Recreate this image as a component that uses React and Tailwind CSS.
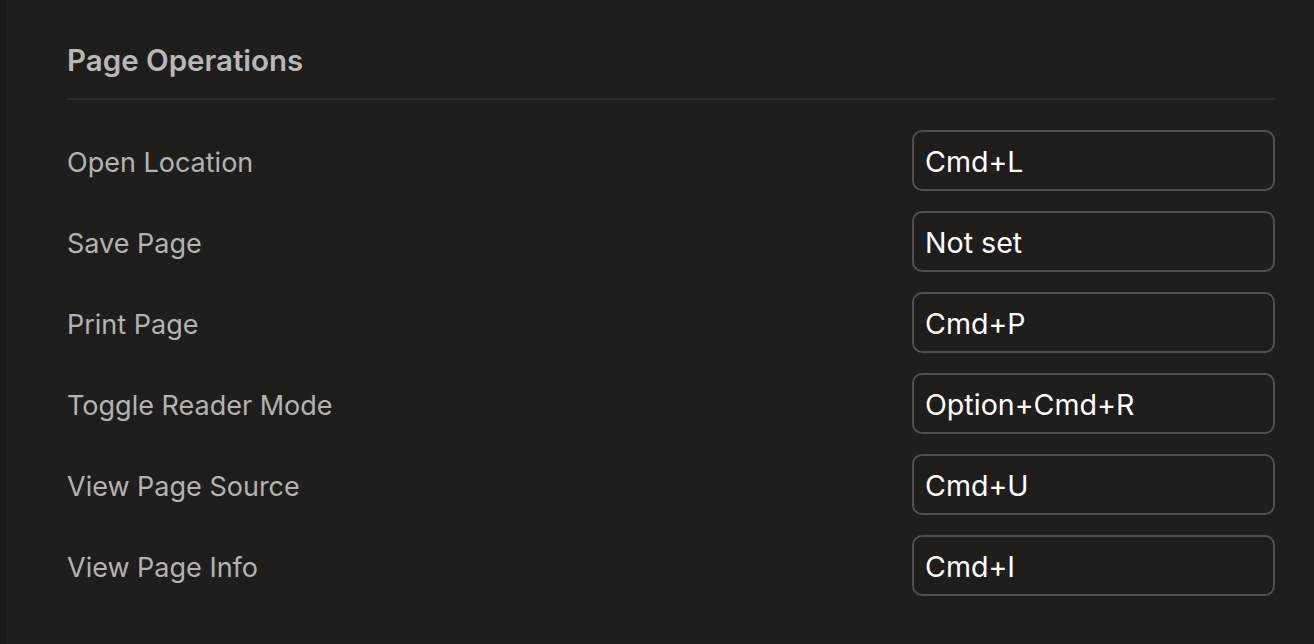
import React from 'react'

const rows = [
  { label: 'Open Location', key: 'Cmd+L' },
  { label: 'Save Page', key: 'Not set' },
  { label: 'Print Page', key: 'Cmd+P' },
  { label: 'Toggle Reader Mode', key: 'Option+Cmd+R' },
  { label: 'View Page Source', key: 'Cmd+U' },
  { label: 'View Page Info', key: 'Cmd+I' },
]

export default function App() {
  return (
    <div className="flex h-screen w-full bg-[#1f1e1d] font-['Inter',sans-serif]">
      <div className="w-[7px] bg-[#191918]" />
      <div className="flex-1 pl-[60px] pr-[39px]">
        <div className="pt-[43px]">
          <h2 className="text-[29.5px] leading-[34px] font-semibold text-[#b8b8b8]">Page Operations</h2>
          <div className="mt-[21px] h-[2px] bg-[#2c2b2a]" />
        </div>
        <div className="mt-[30px] flex flex-col gap-[20px]">
          {rows.map(r => (
            <div key={r.label} className="flex items-center justify-between">
              <span className="text-[27px] text-[#b3b3b3] pt-[5px]">{r.label}</span>
              <div className="flex h-[61px] w-[363px] items-center rounded-[10px] border-2 border-[#505050] px-[11px] pt-[4px] text-[28.6px] text-white">
                {r.key}
              </div>
            </div>
          ))}
        </div>
      </div>
    </div>
  )
}
